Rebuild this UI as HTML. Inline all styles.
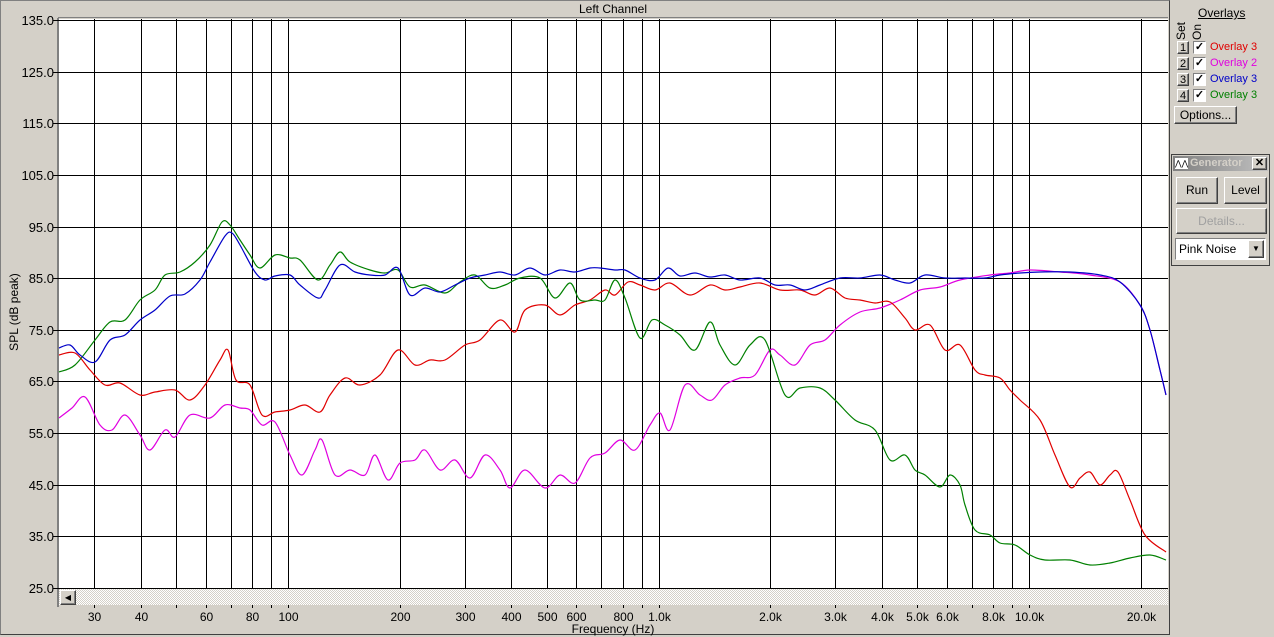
<!DOCTYPE html>
<html><head><meta charset="utf-8"><style>
body{margin:0;width:1274px;height:637px;background:#d4d0c8;font-family:"Liberation Sans",sans-serif;font-size:12px;overflow:hidden;position:relative}
.a{position:absolute}
.btn{position:absolute;background:#d4d0c8;border:1px solid;border-color:#fff #404040 #404040 #fff;box-shadow:inset -1px -1px #808080;text-align:center;font-size:12px;box-sizing:border-box}
.ov{position:absolute;left:1210px;font-size:11px}
.n{position:absolute;left:1177px;width:12px;height:13px;font-size:11px;line-height:12px}
.cb{position:absolute;left:1193px;width:13px;height:13px;background:#fff;border:1px solid;border-color:#808080 #fff #fff #808080;box-sizing:border-box;font-size:11px;line-height:11px;text-align:center;font-weight:bold}
</style></head><body>
<div class="a" style="left:0;top:0;width:1170px;height:635px;border:1px solid #404040;border-color:#808080 #404040 #404040 #808080;box-sizing:border-box"></div>
<div class="a" style="left:58px;top:2px;width:1110px;height:15px;background:#d4d0c8;border-bottom:1px solid #808080;text-align:center;line-height:15px">Left Channel</div>
<svg class="a" style="left:0;top:0" width="1170" height="637" id="s">
<rect x="57" y="18" width="2" height="589" fill="#808080"/>
<rect x="59" y="19" width="1109" height="570" fill="#fff"/>
<defs><pattern id="h" width="2" height="2" patternUnits="userSpaceOnUse"><rect width="2" height="2" fill="#fff"/><rect width="1" height="1" fill="#d4d0c8"/><rect x="1" y="1" width="1" height="1" fill="#d4d0c8"/></pattern></defs>
<rect x="59" y="589" width="1109" height="16" fill="url(#h)"/>
<g id="g"></g>
</svg>
<div class="btn" style="left:60px;top:590px;width:16px;height:15px;font-size:8px;line-height:13px">◀</div>
<div class="a" style="left:0;top:622px;width:1226px;text-align:center;font-size:12px">Frequency (Hz)</div>
<div class="a" style="left:-36px;top:305px;transform:rotate(-90deg);font-size:12px;width:100px;text-align:center">SPL (dB peak)</div>

<div class="a" style="left:1198px;top:6px;font-size:12px;text-decoration:underline">Overlays</div>
<div class="a" style="left:1174px;top:40px;transform:rotate(-90deg);transform-origin:left top;font-size:12px">Set</div>
<div class="a" style="left:1190px;top:40px;transform:rotate(-90deg);transform-origin:left top;font-size:12px">On</div>
<div class="btn n" style="top:41px">1</div><div class="cb" style="top:41px">✓</div><div class="ov" style="top:41px;color:#e00000">Overlay 3</div>
<div class="btn n" style="top:57px">2</div><div class="cb" style="top:57px">✓</div><div class="ov" style="top:57px;color:#e000e0">Overlay 2</div>
<div class="btn n" style="top:73px">3</div><div class="cb" style="top:73px">✓</div><div class="ov" style="top:73px;color:#0000c8">Overlay 3</div>
<div class="btn n" style="top:89px">4</div><div class="cb" style="top:89px">✓</div><div class="ov" style="top:89px;color:#008000">Overlay 3</div>
<div class="btn" style="left:1174px;top:106px;width:63px;height:18px;line-height:16px">Options...</div>

<div class="a" style="left:1171px;top:154px;width:99px;height:112px;border:1px solid #404040;box-sizing:border-box;background:#d4d0c8"></div>
<div class="a" style="left:1173px;top:156px;width:95px;height:15px;background:linear-gradient(90deg,#808080,#c0c0c0);color:#d4d0c8;font-weight:bold;font-size:11px;line-height:15px;padding-left:17px;box-sizing:border-box;overflow:hidden">Generator</div>
<div class="a" style="left:1175px;top:158px;width:13px;height:11px;background:#fff;font-size:8px;line-height:11px">⋀⋀</div>
<div class="btn" style="left:1252px;top:157px;width:15px;height:13px;font-size:11px;line-height:11px;font-weight:bold">✕</div>
<div class="btn" style="left:1176px;top:177px;width:42px;height:27px;line-height:25px">Run</div>
<div class="btn" style="left:1224px;top:177px;width:43px;height:27px;line-height:25px">Level</div>
<div class="btn" style="left:1176px;top:208px;width:91px;height:26px;line-height:24px;color:#a0a0a0">Details...</div>
<div class="a" style="left:1175px;top:238px;width:91px;height:22px;background:#fff;border:1px solid;border-color:#808080 #fff #fff #808080;box-sizing:border-box;line-height:20px;padding-left:3px">Pink Noise</div>
<div class="btn" style="left:1248px;top:240px;width:16px;height:18px;font-size:8px;line-height:16px">▼</div>

<script>
const g=document.getElementById('g');let h='';
const X=f=>288+370.5*Math.log10(f/100);
const Y=d=>20+(135-d)*5.164;
for(let d=135;d>=25;d-=10){const y=Math.round(Y(d));h+=`<line x1="53" x2="1168" y1="${y+.5}" y2="${y+.5}" stroke="#000"/>`;
h+=`<text x="54" y="${y+5}" text-anchor="end" font-size="13" font-family="Liberation Sans">${d.toFixed(1)}</text>`;}
const fs=[30,40,50,60,70,80,90,100,200,300,400,500,600,700,800,900,1000,2000,3000,4000,5000,6000,7000,8000,9000,10000,20000];
const lab={30:'30',40:'40',60:'60',80:'80',100:'100',200:'200',300:'300',400:'400',500:'500',600:'600',800:'800',1000:'1.0k',2000:'2.0k',3000:'3.0k',4000:'4.0k',5000:'5.0k',6000:'6.0k',8000:'8.0k',10000:'10.0k',20000:'20.0k'};
fs.forEach(f=>{const x=Math.round(X(f))+.5;h+=`<line x1="${x}" x2="${x}" y1="19" y2="588" stroke="#000"/><line x1="${x}" x2="${x}" y1="605" y2="608" stroke="#000"/>`;
if(lab[f])h+=`<text x="${x}" y="621" text-anchor="middle" font-size="12" font-family="Liberation Sans">${lab[f]}</text>`;});
const C={
'#0000c8':'59,348 70,345 80,355 95,362 110,340 125,335 140,320 155,310 170,296 185,294 200,280 210,262 225,236 232,233 240,245 255,272 265,280 275,276 290,275 300,285 318,298 325,290 340,265 355,272 370,275 385,275 398,268 410,295 425,288 440,292 455,285 470,278 485,275 500,272 515,275 530,268 545,275 560,270 575,272 590,268 600,268 615,270 625,270 640,278 655,280 668,268 680,276 695,273 710,277 725,275 740,280 760,278 775,285 790,285 805,290 820,285 840,278 860,278 880,275 895,280 910,283 925,275 945,278 965,278 985,278 1000,275 1020,273 1040,272 1070,272 1100,275 1120,282 1140,305 1150,330 1160,370 1166,395',
'#008000':'59,372 75,365 95,340 110,322 125,320 140,300 155,290 165,275 180,272 195,262 210,245 222,222 230,225 240,240 250,255 260,268 275,255 290,258 300,260 318,280 330,265 340,252 350,262 370,270 385,273 398,270 410,287 425,285 445,293 460,282 475,275 490,288 505,285 520,278 540,278 555,298 570,283 580,300 595,300 605,300 615,280 625,298 640,338 652,320 665,325 680,335 695,350 710,322 720,345 735,365 750,345 765,340 785,395 800,388 820,388 835,400 855,420 875,430 890,460 905,455 915,470 925,475 940,487 950,475 960,485 965,505 975,530 990,535 1000,543 1015,545 1030,555 1045,560 1070,560 1090,565 1110,563 1130,558 1150,555 1166,560',
'#e00000':'59,355 75,353 90,370 105,385 120,383 140,395 155,392 175,390 190,400 205,385 220,360 228,350 236,380 250,385 262,415 275,412 290,410 305,405 320,412 330,395 345,378 360,385 380,375 398,350 415,365 430,360 445,360 465,345 480,340 500,320 515,332 525,310 545,305 560,315 575,305 590,300 605,290 615,295 628,282 640,285 655,290 670,283 690,295 710,285 725,290 740,287 760,283 780,290 800,290 815,295 830,288 845,298 860,300 875,303 890,302 905,318 915,330 930,325 945,350 960,345 975,370 985,375 1000,378 1010,390 1020,400 1040,420 1055,455 1070,487 1080,478 1090,472 1100,485 1110,475 1118,472 1130,500 1145,535 1166,552',
'#e000e0':'59,418 72,408 85,397 100,425 112,430 125,415 140,435 150,450 165,430 175,437 190,415 210,418 225,405 240,408 250,410 262,425 275,422 290,455 302,475 315,450 322,440 335,475 350,470 365,475 375,455 388,480 400,463 415,460 425,450 440,470 455,460 470,478 485,455 500,470 510,488 525,470 545,488 560,475 575,483 590,458 605,453 620,440 635,450 650,425 660,413 670,430 685,385 700,395 712,400 725,385 740,378 755,375 770,350 780,355 795,365 810,345 825,340 840,325 860,312 880,308 900,300 920,290 940,287 960,280 990,275 1010,273 1030,270 1060,272 1090,275 1120,282 1140,305 1150,330 1160,370 1166,395'};
function smooth(s){const p=s.split(' ').map(t=>t.split(',').map(Number));let d=`M${p[0][0]},${p[0][1]}`;
for(let i=0;i<p.length-1;i++){const p0=p[i-1]||p[i],p1=p[i],p2=p[i+1],p3=p[i+2]||p2;
d+=` C${(p1[0]+(p2[0]-p0[0])/6).toFixed(1)},${(p1[1]+(p2[1]-p0[1])/6).toFixed(1)} ${(p2[0]-(p3[0]-p1[0])/6).toFixed(1)},${(p2[1]-(p3[1]-p1[1])/6).toFixed(1)} ${p2[0]},${p2[1]}`;}return d;}
['#e000e0','#e00000','#008000','#0000c8'].forEach(c=>{h+=`<path d="${smooth(C[c])}" fill="none" stroke="${c}" stroke-width="1.2"/>`;});
g.innerHTML=h;
</script>
</body></html>
